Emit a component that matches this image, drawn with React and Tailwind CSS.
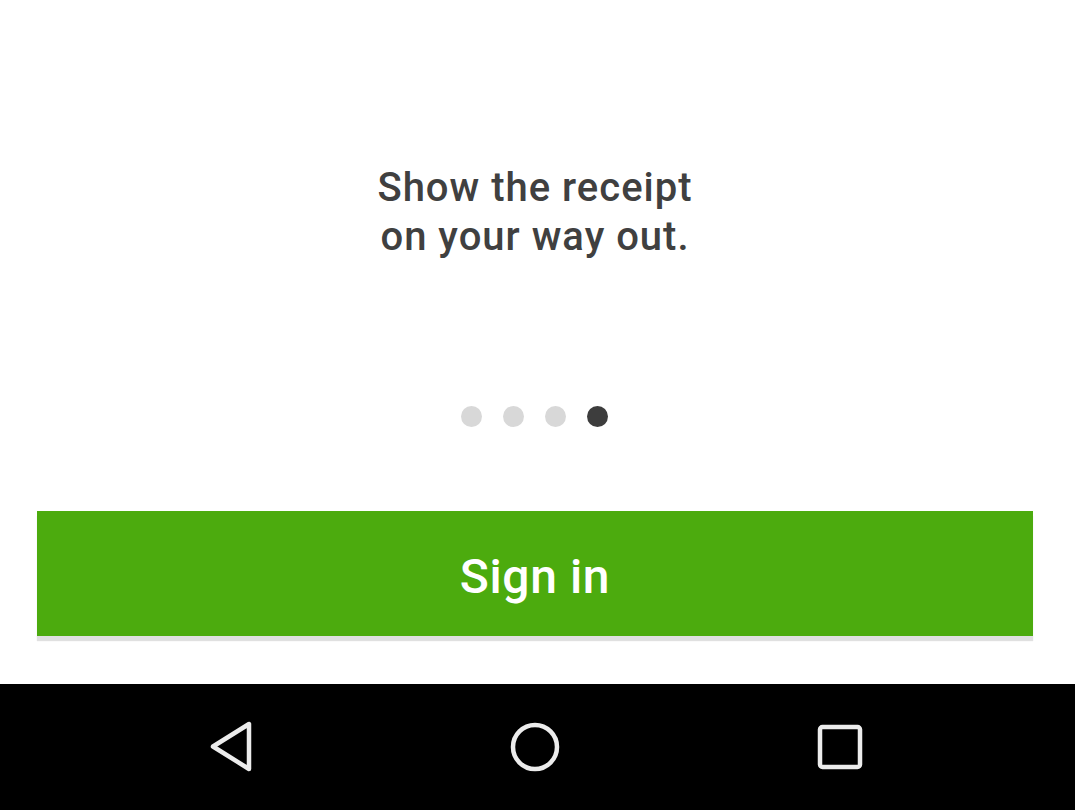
export default function App() {
  return (
    <div className="w-[1075px] h-[810px] bg-white flex flex-col overflow-hidden" style={{ fontFamily: 'Roboto, "Noto Sans", sans-serif' }}>
      <div className="flex-1 flex flex-col">
        <div className="mt-[163px] w-[1070px] text-center text-[40px] leading-[49px] tracking-[1px] font-medium text-[#404040]">
          <div>Show the receipt</div>
          <div>on your way out.</div>
        </div>
        <div className="mt-[145px] ml-[461px] flex gap-[21px]">
          <span className="w-[21px] h-[21px] rounded-full bg-[#d8d8d8]" />
          <span className="w-[21px] h-[21px] rounded-full bg-[#d8d8d8]" />
          <span className="w-[21px] h-[21px] rounded-full bg-[#d8d8d8]" />
          <span className="w-[21px] h-[21px] rounded-full bg-[#3d3d3d]" />
        </div>
        <div className="mt-[84px] ml-[37px] w-[996px] h-[125px] bg-[#4cab0e] shadow-[0_5px_1px_rgba(0,0,0,0.12)] flex items-center justify-center">
          <span className="pt-[6px] text-white text-[48px] tracking-[0.6px] font-medium leading-none">Sign in</span>
        </div>
      </div>
      <div className="h-[126px] bg-black flex items-center pl-[209px]">
        <svg width="44" height="51" viewBox="0 0 44 51" fill="none" className="mt-[-1px]">
          <path d="M40 3 L40 48 L4 25.5 Z" stroke="#ececec" strokeWidth="4.5" strokeLinejoin="round" />
        </svg>
        <svg width="52" height="52" viewBox="0 0 52 52" fill="none" className="ml-[256px]">
          <circle cx="26" cy="26" r="22" stroke="#ececec" strokeWidth="4.5" />
        </svg>
        <svg width="46" height="46" viewBox="0 0 46 46" fill="none" className="ml-[256px] mt-[-1px]">
          <rect x="3" y="3" width="40" height="40" rx="2.5" stroke="#ececec" strokeWidth="4.5" />
        </svg>
      </div>
    </div>
  );
}
